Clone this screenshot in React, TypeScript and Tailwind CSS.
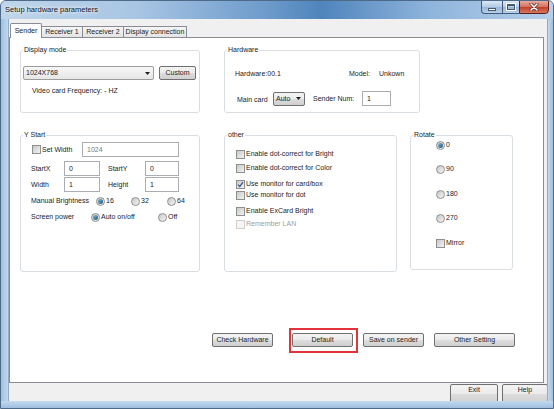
import React from "react";

function Check({ checked = false, disabled = false }: { checked?: boolean; disabled?: boolean }) {
  return (
    <span
      className={
        disabled
          ? "flex items-center justify-center w-[9px] h-[9px] shrink-0 border border-[#cfcfcf] bg-[#f6f6f6]"
          : "flex items-center justify-center w-[9px] h-[9px] shrink-0 border border-[#8e8f8f] bg-gradient-to-br from-[#c9c9c9] to-[#f3f3f3]"
      }
    >
      {checked && (
        <svg width="7" height="7" viewBox="0 0 7 7">
          <path d="M1 3.6 L2.8 5.4 L6 1.2" fill="none" stroke="#3d568a" strokeWidth="1.3" />
        </svg>
      )}
    </span>
  );
}

function Radio({ on = false }: { on?: boolean }) {
  return (
    <span className="flex items-center justify-center w-[9px] h-[9px] shrink-0 rounded-full border border-[#8e8f8f] bg-gradient-to-br from-[#c6c6c6] to-[#f6f6f6]">
      {on && <span className="w-[5px] h-[5px] rounded-full bg-gradient-to-br from-[#86bcd8] to-[#1a5378]" />}
    </span>
  );
}

function CheckItem({ label, checked, disabled }: { label: string; checked?: boolean; disabled?: boolean }) {
  return (
    <div className="flex items-center h-[10px] gap-[1px]">
      <Check checked={checked} disabled={disabled} />
      <span className={disabled ? "text-[#a0a0a0]" : ""}>{label}</span>
    </div>
  );
}

function RadioItem({ label, on, className = "" }: { label: string; on?: boolean; className?: string }) {
  return (
    <div className={"flex items-center h-[10px] gap-[1px] " + className}>
      <Radio on={on} />
      <span>{label}</span>
    </div>
  );
}

function Btn({ label, className = "" }: { label: string; className?: string }) {
  return (
    <div
      className={
        "flex items-center justify-center h-[14px] shrink-0 border border-[#707070] rounded-[2px] bg-[linear-gradient(#f3f3f3_0%,#ebebeb_48%,#dddddd_52%,#cfcfcf_100%)] " +
        className
      }
    >
      {label}
    </div>
  );
}

function TBox({ value, className = "", gray }: { value: string; className?: string; gray?: boolean }) {
  return (
    <div
      className={
        "h-[15px] shrink-0 border border-[#abadb3] bg-white flex items-center pl-[4px] " +
        (gray ? "text-[#7a7a7a] " : "") +
        className
      }
    >
      {value}
    </div>
  );
}

function Arrow() {
  return (
    <svg width="5" height="3" viewBox="0 0 5 3" className="shrink-0">
      <path d="M0 0 H5 L2.5 3 Z" fill="#1e1e1e" />
    </svg>
  );
}

function Group({ title, className = "", children }: { title: string; className?: string; children?: React.ReactNode }) {
  return (
    <fieldset className={"border border-[#d9dee3] rounded-[3px] shrink-0 min-w-0 " + className}>
      <legend className="ml-[2px] px-[1px] leading-[10px]">{title}</legend>
      {children}
    </fieldset>
  );
}

export default function App() {
  return (
    <div className="w-[554px] h-[409px] flex flex-col overflow-hidden font-['Liberation_Sans',Arial,sans-serif] text-[7px] leading-[10px] text-[#1c1c1c] bg-[#a9c7e5] border border-[#4d6a88] rounded-t-[6px]">
      {/* Title bar */}
      <div className="h-[18px] shrink-0 flex items-start bg-[linear-gradient(to_right,#bfd5ea_0%,#a7c5e4_25%,#6d9bcb_48%,#4f84bc_58%,#8fb5dc_78%,#b6cfe9_100%)]">
        <div className="pl-[4px] pt-[3px] text-[7.5px] leading-[11px] text-[#111] [text-shadow:0_0_5px_#ffffff,0_0_3px_#ffffff]">
          Setup hardware parameters
        </div>
        <div className="ml-auto mr-[4px] -mt-px flex h-[14px]">
          <div className="flex border border-[#3e5c7f] border-r-0 rounded-bl-[4px] overflow-hidden bg-[linear-gradient(#dbe8f5_0%,#b3cbe4_50%,#98b6d6_52%,#b8d0e8_100%)]">
            <div className="w-[21px] flex items-center justify-center border-r border-[#3e5c7f]">
              <span className="w-[8px] h-[3px] mt-[4px] bg-white border border-[#435a75]" />
            </div>
            <div className="w-[16px] flex items-center justify-center">
              <span className="w-[8px] h-[6px] bg-transparent border border-[#435a75] border-t-2 outline outline-1 outline-white" />
            </div>
          </div>
          <div className="w-[30px] flex items-center justify-center border border-[#5a2020] rounded-br-[4px] bg-[linear-gradient(#e9a99c_0%,#d5705e_50%,#c2402b_52%,#d7795e_100%)]">
            <svg width="10" height="8" viewBox="0 0 10 8">
              <path d="M2 1 L8 7 M8 1 L2 7" stroke="#5b2a22" strokeWidth="3" strokeLinecap="round" />
              <path d="M2 1 L8 7 M8 1 L2 7" stroke="#ffffff" strokeWidth="1.6" strokeLinecap="round" />
            </svg>
          </div>
        </div>
      </div>

      {/* Middle */}
      <div className="flex h-[382px] shrink-0">
        <div className="w-[7px] shrink-0 bg-gradient-to-r from-[#9fbfdf] to-[#c3d9ee]" />
        <div className="w-[539px] shrink-0 bg-[#f0f0f0] flex flex-col overflow-hidden border-l border-[#92aac4]">
          {/* Tabs */}
          <div className="flex items-end h-[14px] mt-[4px] ml-[1px] shrink-0">
            <div className="relative z-10 w-[32px] h-[15px] -mb-px border border-b-0 border-[#898c95] bg-white flex items-start justify-center pt-[2px] rounded-t-[2px]">
              Sender
            </div>
            <div className="w-[41px] h-[11px] border border-b-0 border-l-0 border-[#898c95] bg-gradient-to-b from-[#f5f5f5] to-[#e4e4e4] flex items-center justify-center">
              Receiver 1
            </div>
            <div className="w-[41px] h-[11px] border border-b-0 border-l-0 border-[#898c95] bg-gradient-to-b from-[#f5f5f5] to-[#e4e4e4] flex items-center justify-center">
              Receiver 2
            </div>
            <div className="w-[63px] h-[11px] border border-b-0 border-l-0 border-[#898c95] bg-gradient-to-b from-[#f5f5f5] to-[#e4e4e4] flex items-center justify-center">
              Display connection
            </div>
          </div>

          {/* Tab page */}
          <div className="w-[535px] h-[346px] shrink-0 border border-[#898c95] bg-white pl-[10px] pt-[7px]">
            {/* Row 1 */}
            <div className="flex gap-[24px] items-start">
              <Group title="Display mode" className="w-[180px] h-[68px]">
                <div className="flex mt-[11px] ml-[2px] gap-[5px]">
                  <div className="w-[131px] h-[14px] border border-[#9c9c9c] rounded-[2px] bg-gradient-to-b from-[#f8f8f8] to-[#e6e6e6] flex items-center pl-[2px] pr-[3px]">
                    <span>1024X768</span>
                    <span className="ml-auto">
                      <Arrow />
                    </span>
                  </div>
                  <Btn label="Custom" className="w-[37px]" />
                </div>
                <div className="mt-[6px] ml-[11px]">Video card Frequency: - HZ</div>
              </Group>

              <Group title="Hardware" className="w-[196px] h-[68px]">
                <div className="flex mt-[14px] ml-[10px] h-[10px] items-center">
                  <span className="w-[114px] shrink-0">Hardware:00.1</span>
                  <span className="w-[30px] shrink-0">Model:</span>
                  <span>Unkown</span>
                </div>
                <div className="flex items-center mt-[12px] ml-[12px] h-[15px]">
                  <span className="w-[36px] shrink-0 mt-[2px]">Main card</span>
                  <div className="w-[32px] h-[14px] shrink-0 border border-[#707070] rounded-[2px] bg-[linear-gradient(#f3f3f3_0%,#ebebeb_48%,#dddddd_52%,#cfcfcf_100%)] flex items-center pl-[2px] pr-[3px]">
                    <span>Auto</span>
                    <span className="ml-auto">
                      <Arrow />
                    </span>
                  </div>
                  <span className="ml-[8px] w-[49px] shrink-0">Sender Num:</span>
                  <TBox value="1" className="w-[29px] pl-[3px]" />
                </div>
              </Group>
            </div>

            {/* Row 2 */}
            <div className="flex items-start mt-[17px]">
              <Group title="Y Start" className="w-[180px] h-[142px]">
                <div className="flex items-center mt-[2px] ml-[11px] h-[15px]">
                  <div className="w-[50px] shrink-0 flex items-center gap-[1px]">
                    <Check />
                    <span>Set Width</span>
                  </div>
                  <TBox value="1024" gray className="w-[97px]" />
                </div>
                <div className="flex items-center mt-[4px] ml-[10px] h-[15px]">
                  <span className="w-[33px] shrink-0">StartX</span>
                  <TBox value="0" className="w-[36px]" />
                  <span className="ml-[8px] w-[37px] shrink-0">StartY</span>
                  <TBox value="0" className="w-[34px]" />
                </div>
                <div className="flex items-center mt-[1px] ml-[10px] h-[15px]">
                  <span className="w-[33px] shrink-0">Width</span>
                  <TBox value="1" className="w-[36px]" />
                  <span className="ml-[8px] w-[37px] shrink-0">Height</span>
                  <TBox value="1" className="w-[34px]" />
                </div>
                <div className="flex items-center mt-[4px] ml-[10px] h-[10px]">
                  <span className="w-[65px] shrink-0">Manual Brightness</span>
                  <RadioItem label="16" on className="w-[35px] shrink-0" />
                  <RadioItem label="32" className="w-[36px] shrink-0" />
                  <RadioItem label="64" />
                </div>
                <div className="flex items-center mt-[6px] ml-[10px] h-[10px]">
                  <span className="w-[60px] shrink-0">Screen power</span>
                  <RadioItem label="Auto on/off" on className="w-[67px] shrink-0" />
                  <RadioItem label="Off" />
                </div>
              </Group>

              <Group title="other" className="ml-[24px] w-[173px] h-[142px]">
                <div className="ml-[11px] flex flex-col">
                  <div className="mt-[9px]">
                    <CheckItem label="Enable dot-correct for Bright" />
                  </div>
                  <div className="mt-[4px]">
                    <CheckItem label="Enable dot-correct for Color" />
                  </div>
                  <div className="mt-[6px]">
                    <CheckItem label="Use monitor for card/box" checked />
                  </div>
                  <div className="mt-[1px]">
                    <CheckItem label="Use monitor for dot" />
                  </div>
                  <div className="mt-[6px]">
                    <CheckItem label="Enable ExCard Bright" />
                  </div>
                  <div className="mt-[3px]">
                    <CheckItem label="Remember LAN" disabled />
                  </div>
                </div>
              </Group>

              <Group title="Rotate" className="ml-[13px] w-[103px] h-[140px]">
                <div className="ml-[25px] flex flex-col">
                  <RadioItem label="0" on />
                  <RadioItem label="90" className="mt-[14px]" />
                  <RadioItem label="180" className="mt-[15px]" />
                  <RadioItem label="270" className="mt-[14px]" />
                  <div className="mt-[15px]">
                    <CheckItem label="Mirror" />
                  </div>
                </div>
              </Group>
            </div>

            {/* Row 3 buttons */}
            <div className="flex mt-[61px] ml-[192px]">
              <Btn label="Check Hardware" className="w-[61px]" />
              <div className="relative ml-[19px]">
                <Btn label="Default" className="w-[61px]" />
                <div className="absolute -left-[3px] -top-[5px] -right-[5px] -bottom-[6px] border-2 border-[#e0343a]" />
              </div>
              <Btn label="Save on sender" className="ml-[10px] w-[61px]" />
              <Btn label="Other Setting" className="ml-[10px] w-[81px]" />
            </div>
          </div>

          {/* Bottom buttons */}
          <div className="flex mt-[1px] ml-[441px] shrink-0">
            <Btn label="Exit" className="w-[48px] !h-[20px] pb-[8px]" />
            <Btn label="Help" className="ml-[4px] w-[46px] !h-[20px] pb-[8px]" />
          </div>
        </div>
        <div className="w-[6px] shrink-0 bg-gradient-to-l from-[#9fbfdf] to-[#c3d9ee] border-l border-[#92aac4]" />
      </div>

      {/* Bottom frame */}
      <div className="h-[7px] shrink-0 bg-gradient-to-b from-[#c3d9ee] to-[#9fbfdf]" />
    </div>
  );
}
